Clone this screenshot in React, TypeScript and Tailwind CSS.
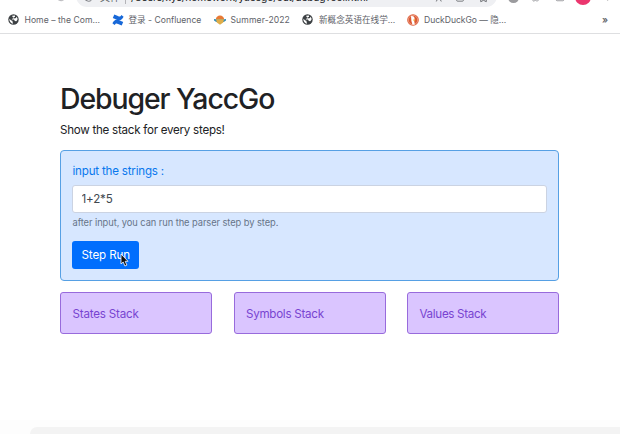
import React from "react";
import { Star, Puzzle, Languages, Share, PanelTop, ArrowLeft, ArrowRight, RotateCw, Info, EllipsisVertical } from "lucide-react";

function Globe() {
  return (
    <svg viewBox="0 0 12 12" className="size-[11px] shrink-0">
      <circle cx="6" cy="6" r="5.7" fill="#3c4043" />
      <path d="M1.5 5.2 3.6 7.2 4.8 7.4 5 8.8 5.6 10.6C3 10.4 1.2 8 1.5 5.2Z" fill="#fff" />
      <path d="M4.5 1.8 7.6 1.5 7.7 3 6.2 3.9 5.9 5 4.2 5.2 4.3 6 6.5 6.1 7.5 7.5 9 7.9 10.3 6.2 10.4 5 9.4 3.1 8.6 4.4 7.3 4.8 6.5 4.4 5 3.3Z" fill="#fff" />
    </svg>
  );
}

function Confluence() {
  return (
    <svg viewBox="0 0 12 12" className="size-3 shrink-0" fill="#1768d8">
      <path d="M.4 9.3C2.7 5.3 4.5 4.8 7.7 6.4L11.2 8 9.7 11.5 6.1 9.9C4.3 9 3.6 9.2 2.6 11Z" />
      <path d="M11.6 2.7C9.3 6.7 7.5 7.2 4.3 5.6L.8 4 2.3.5 5.9 2.1C7.7 3 8.4 2.8 9.4 1Z" />
    </svg>
  );
}

function Summer() {
  return (
    <svg viewBox="0 0 12 12" className="size-3 shrink-0">
      <path d="M1.8 5.6a4.2 4.2 0 0 1 8.4 0Z" fill="#e87a35" />
      <path d="M0 5 2 5.3h8L12 5v1.5L9.8 8H2.2L0 6.5Z" fill="#388eb5" />
      <path d="M2 5.3h8L9.2 8.5 6 10.7 2.8 8.5Z" fill="#dfad48" />
    </svg>
  );
}

function Duck() {
  return (
    <svg viewBox="0 0 12 12" className="size-3 shrink-0">
      <circle cx="6" cy="6" r="5.8" fill="#dc5933" />
      <circle cx="6" cy="6" r="4.7" fill="none" stroke="#f8d8ca" strokeWidth=".5" />
      <path d="M4 2.2C6.4 1.8 7.7 3 7.6 5L7.2 7 7.8 10.4 5.5 10.8 4.4 7Z" fill="#fff" />
      <path d="m6.2 5.5 2.5.2-1 1-1.6-.2Z" fill="#f2b632" />
    </svg>
  );
}

function Bookmark({ icon, width, spacing, children }: { icon: React.ReactNode; width: string; spacing: string; children: React.ReactNode }) {
  return (
    <div className={`flex shrink-0 items-center whitespace-nowrap ${width} ${spacing}`}>
      <span className="flex w-[17px] shrink-0 items-center">{icon}</span>
      <span>{children}</span>
    </div>
  );
}

function Stack({ name, spacing }: { name: string; spacing: string }) {
  return (
    <section className={`h-[42px] rounded-[3px] border border-[#986bdc] bg-[#dac5ff] px-[11.5px] pt-[13px] text-[11.6px] leading-[17px] text-[#7844d1] ${spacing}`}>
      {name}
    </section>
  );
}

export default function App() {
  return (
    <div className="flex h-[434px] w-[620px] flex-col overflow-hidden bg-white font-['Inter','Noto_Sans_CJK_SC',sans-serif] text-[#202124]">
      <header className="h-[34px] shrink-0 border-b border-[#dedfe1]">
        <div className="flex h-[7px] items-end overflow-hidden">
          <div className="flex h-[22px] w-full shrink-0 items-center">
            <div className="flex w-[76px] shrink-0 items-center gap-[14px] pl-[8px] text-[#a7a7ac]">
              <ArrowLeft className="size-[10px]" />
              <ArrowRight className="size-[10px]" />
              <RotateCw className="mt-[2px] size-[10px]" />
            </div>
            <div className="flex h-[22px] w-[421px] shrink-0 items-center rounded-full bg-[#eff0f3] pl-[8px] text-[10px] leading-[16px]">
              <Info className="mt-[3px] mr-[7px] size-[9px] shrink-0 text-[#55585d]" />
              <span className="mt-[2px] shrink-0 text-[#606367]">文件</span>
              <span className="mx-[5px] mt-[3px] h-[12px] w-px shrink-0 bg-[#b4b4b8]" />
              <span className="mt-[2px] w-[241px] shrink-0 text-[10.2px] tracking-[-0.13px] whitespace-nowrap">/Users/xys/homework/yaccgo/out/debugTool.html</span>
              <Languages className="mt-px ml-[59px] size-[11px] shrink-0 text-[#606367]" />
              <Share className="mt-[2px] ml-[13px] size-[10px] shrink-0 text-[#606367]" />
              <Star className="mt-[2px] ml-[13px] size-[11px] shrink-0 text-[#606367]" />
            </div>
            <div className="flex flex-1 items-center gap-[13px] pl-[11px] text-[#8c8d91]">
              <span className="mt-[3px] size-[11px] shrink-0 rounded-full bg-[#9b9b9e]" />
              <Puzzle className="mt-[2px] size-[10px] shrink-0" />
              <PanelTop className="mt-[2px] size-[10px] shrink-0" />
              <span className="mt-[2px] -ml-[3px] size-[16px] shrink-0 rounded-full bg-[#eb366e]" />
              <EllipsisVertical className="mt-[1px] -ml-[2px] size-[11px] shrink-0" />
            </div>
          </div>
        </div>
        <nav className="flex h-[26px] items-center pl-[7.5px] text-[8.6px] text-[#606268]">
          <Bookmark icon={<Globe />} width="w-[104px]" spacing="tracking-[0.04px]">Home – the Com...</Bookmark>
          <Bookmark icon={<Confluence />} width="w-[102px]" spacing="tracking-[0px]">登录 - Confluence</Bookmark>
          <Bookmark icon={<Summer />} width="w-[88.5px]" spacing="tracking-[0.1px]">Summer-2022</Bookmark>
          <Bookmark icon={<Globe />} width="w-[105px]" spacing="tracking-[0px]">新概念英语在线学...</Bookmark>
          <Bookmark icon={<Duck />} width="w-[102px]" spacing="tracking-[-0.04px]">DuckDuckGo — 隐...</Bookmark>
          <span className="mr-[12px] ml-auto text-[9.5px] font-semibold">»</span>
        </nav>
      </header>
      <main className="ml-[60px] w-[499px] pt-[47px]">
        <h1 className="h-[41px] whitespace-nowrap text-[28.4px] leading-[36px] font-medium tracking-[-1.08px]">Debuger YaccGo</h1>
        <p className="h-[28px] whitespace-nowrap text-[11.6px] leading-[17px] tracking-[-0.26px]">Show the stack for every steps!</p>
        <section className="h-[131px] rounded-[4px] border border-[#56a0e4] bg-[#d7e7ff] px-[11px] pt-[12px]">
          <label className="ml-[0.5px] block h-[22px] text-[11.6px] leading-[17px] tracking-[-0.2px] text-[#0877ed]" htmlFor="expression">input the strings :</label>
          <input id="expression" className="block h-[28px] w-[475px] rounded-[3px] border border-[#cbd3e2] bg-white px-[8.5px] text-[11.6px] tracking-[-0.15px] text-[#414850] outline-none [font-feature-settings:'calt'_0]" defaultValue="1+2*5" />
          <p className="mt-[3px] ml-[0.5px] h-[25px] whitespace-nowrap text-[9.3px] leading-[14px] tracking-[-0.06px] text-[#667488]">after input, you can run the parser step by step.</p>
          <button className="relative block h-[28px] w-[67px] rounded-[3px] bg-[#006efd] pt-px pl-[9.5px] text-left text-[11.6px] tracking-[-0.12px] whitespace-nowrap text-white">
            Step Run
            <svg className="absolute top-[12px] left-[48px] h-[14px] w-[9px]" viewBox="0 0 9 14"><path d="M1 1v10l2.2-2 1.7 4 2-.9-1.7-3.8H8Z" fill="#111" stroke="#fff" strokeWidth=".8" /></svg>
          </button>
        </section>
        <div className="mt-[11px] grid grid-cols-[152px_152px_152px] justify-between">
          <Stack name="States Stack" spacing="tracking-[-0.18px]" />
          <Stack name="Symbols Stack" spacing="tracking-[-0.26px]" />
          <Stack name="Values Stack" spacing="tracking-[-0.3px]" />
        </div>
      </main>
      <footer className="mt-auto flex h-[14px] flex-col bg-[#fdfdfd]">
        <div className="mt-auto ml-[30px] h-[7px] rounded-tl-[30px] bg-[#f3f3f3]" />
      </footer>
    </div>
  );
}
